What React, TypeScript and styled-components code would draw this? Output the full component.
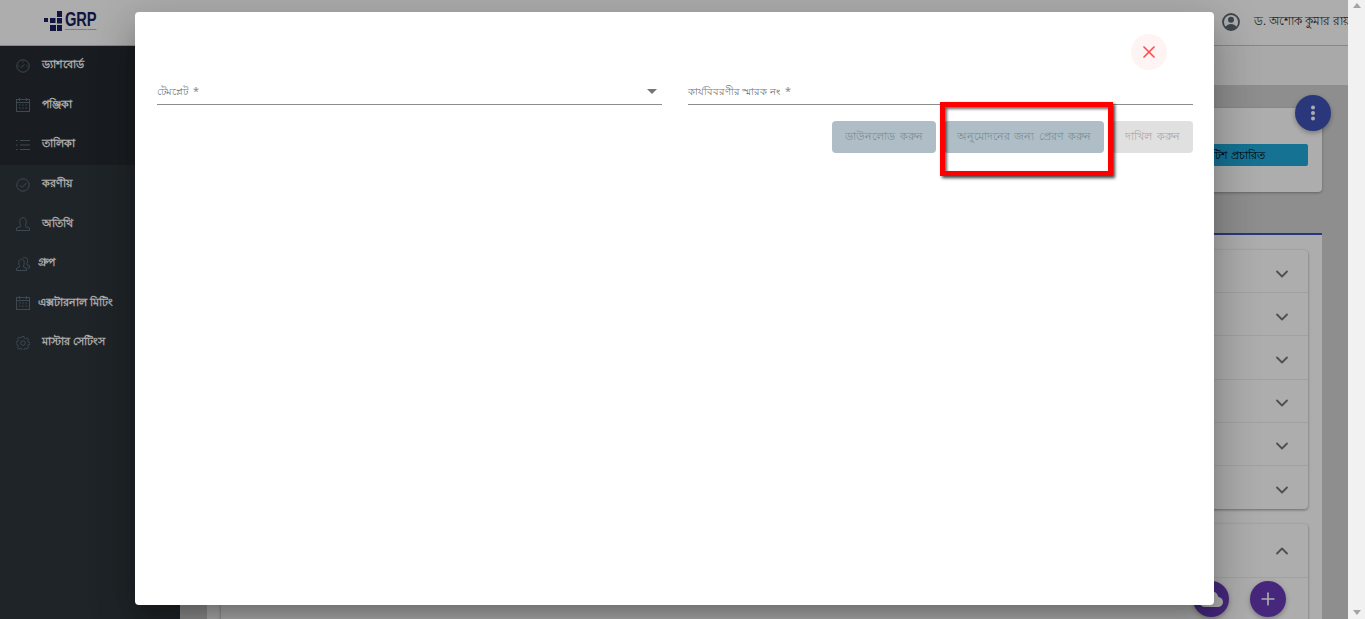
import React from "react";
import styled, { createGlobalStyle } from "styled-components";
import { ChevronDown, ChevronUp, Plus, X } from "lucide-react";

const Global = createGlobalStyle`
  html, body { margin: 0; padding: 0; height: 100%; overflow: hidden; }
  body { font-family: "Noto Sans", "Liberation Sans", sans-serif; }
  * { box-sizing: border-box; }
`;

const Shell = styled.div`
  display: flex;
  width: 100vw;
  height: 100vh;
  overflow: hidden;
`;
const Viewport = styled.div`
  position: relative;
  flex: 1;
  min-width: 0;
  display: flex;
  flex-direction: column;
  overflow: hidden;
  background: #d2d2d2;
`;
const Header = styled.header`
  height: 46px;
  flex: none;
  display: flex;
  align-items: center;
  background: #fff;
  border-bottom: 1px solid #c8c8c8;
`;
const LogoBox = styled.div`
  width: 180px;
  flex: none;
  height: 100%;
  padding: 11px 0 0 44px;
`;
const Logo = styled.div`
  display: flex;
  align-items: flex-start;
  gap: 3px;
  color: #1b1f5e;
`;
const LogoWord = styled.div`
  display: flex;
  flex-direction: column;
  width: 31px;
  font-family: "Liberation Sans", sans-serif;
  font-weight: 700;
  color: #1b1f5e;
`;
const LogoLetters = styled.span`
  font-size: 21px;
  line-height: 16px;
  letter-spacing: -0.2px;
  display: block;
  transform: scaleX(0.7);
  transform-origin: left top;
  white-space: nowrap;
`;
const LogoTag = styled.span`
  margin-top: 1px;
  font-size: 2.2px;
  line-height: 3px;
  font-weight: 400;
  white-space: nowrap;
`;
const HeaderRight = styled.div`
  margin-left: auto;
  display: flex;
  align-items: center;
  gap: 14px;
  width: 126px;
  flex: none;
  overflow: hidden;
  white-space: nowrap;
  font-size: 11.5px;
  color: #333;
`;
const AvatarIcon = styled.svg`
  flex: none;
  margin-top: -2px;
`;
const Body = styled.div`
  flex: 1;
  display: flex;
  min-height: 0;
`;
const Sidebar = styled.nav`
  width: 180px;
  flex: none;
  background: #2e353b;
  display: flex;
  flex-direction: column;
`;
const SideRow = styled.div<{ $dim?: boolean; $tight?: boolean }>`
  height: 39.6px;
  flex: none;
  display: flex;
  align-items: center;
  padding-left: 16px;
  gap: ${(p) => (p.$tight ? "8px" : "12px")};
  background: ${(p) => (p.$dim ? "#262b31" : "transparent")};
  color: #fff;
  font-weight: 700;
  font-size: 11px;
  white-space: nowrap;
  svg { flex: none; color: #5c6b78; }
`;
const Main = styled.main`
  flex: 1;
  min-width: 0;
  display: flex;
  flex-direction: column;
`;
const SubBar = styled.div`
  height: 39px;
  flex: none;
  background: #fafafa;
`;
const Content = styled.div`
  flex: 1;
  min-height: 0;
  padding: 23px 26px 0 27px;
  display: flex;
  flex-direction: column;
  overflow: hidden;
`;
const TopCard = styled.section`
  height: 84px;
  flex: none;
  background: #fff;
  border-radius: 4px;
  box-shadow: 0 1px 3px rgba(0, 0, 0, 0.3);
  padding: 36px 14px 0 0;
  display: flex;
  justify-content: flex-end;
`;
const InfoButton = styled.div`
  width: 118px;
  height: 22px;
  background: #20a8d8;
  border-radius: 2px;
  color: #000;
  font-size: 10.5px;
  font-weight: 500;
  line-height: 22px;
  white-space: nowrap;
  overflow: hidden;
  text-align: right;
  padding-right: 43px;
`;
const Panel = styled.section`
  margin-top: 41px;
  flex: 1;
  background: #fff;
  border-top: 2px solid #3f51b5;
  padding: 15px 14px 0;
  display: flex;
  flex-direction: column;
  gap: 15px;
`;
const Accordion = styled.div`
  flex: none;
  background: #fff;
  border-radius: 4px;
  box-shadow: 0 1px 3px rgba(0, 0, 0, 0.4);
`;
const AccordionRow = styled.div<{ $tall?: boolean }>`
  height: ${(p) => (p.$tall ? "54px" : "43.2px")};
  padding-top: ${(p) => (p.$tall ? "0" : "5px")};
  display: flex;
  align-items: center;
  justify-content: flex-end;
  padding-right: 16px;
  border-bottom: 1px solid #ededed;
  color: #757575;
  &:last-child { border-bottom: none; }
`;
const Fab = styled.div<{ $color: string; $x: number; $y: number }>`
  position: absolute;
  left: ${(p) => p.$x}px;
  top: ${(p) => p.$y}px;
  width: 36px;
  height: 36px;
  border-radius: 50%;
  background: ${(p) => p.$color};
  color: #fff;
  display: flex;
  align-items: center;
  justify-content: center;
  box-shadow: 0 2px 5px rgba(0, 0, 0, 0.3);
`;
const Backdrop = styled.div`
  position: absolute;
  inset: 0;
  background: rgba(0, 0, 0, 0.32);
`;
const Dialog = styled.div`
  position: absolute;
  left: 135px;
  top: 12px;
  width: 1079px;
  height: 593px;
  background: #fff;
  border-radius: 4px;
  padding: 22px 21px 0 22px;
  box-shadow: 0 11px 15px -7px rgba(0, 0, 0, 0.2), 0 24px 38px 3px rgba(0, 0, 0, 0.14),
    0 9px 46px 8px rgba(0, 0, 0, 0.12);
`;
const CloseRow = styled.div`
  display: flex;
  justify-content: flex-end;
  padding-right: 26px;
  height: 36px;
`;
const CloseButton = styled.button`
  width: 36px;
  height: 36px;
  padding: 0;
  border: none;
  border-radius: 50%;
  background: #fff4f4;
  color: #ff4d4d;
  display: flex;
  align-items: center;
  justify-content: center;
`;
const Fields = styled.div`
  margin-top: 9px;
  display: grid;
  grid-template-columns: 505px 505px;
  column-gap: 26px;
`;
const Field = styled.div`
  height: 26px;
  border-bottom: 1px solid #8c8c8c;
  display: flex;
  align-items: center;
  justify-content: space-between;
  font-size: 9.6px;
  color: #757575;
  white-space: nowrap;
`;
const Required = styled.span`
  margin-left: 5px;
  font-size: 11px;
  color: #8a8a8a;
`;
const Caret = styled.span`
  width: 0;
  height: 0;
  margin-right: 5px;
  border-left: 5px solid transparent;
  border-right: 5px solid transparent;
  border-top: 5px solid #757575;
`;
const Actions = styled.div`
  margin-top: 16px;
  display: flex;
  justify-content: flex-end;
  gap: 8px;
`;
const ActionButton = styled.button<{ $w: number; $muted?: boolean }>`
  width: ${(p) => p.$w}px;
  height: 32px;
  padding: 0;
  border: none;
  border-radius: 4px;
  background: ${(p) => (p.$muted ? "#e0e0e0" : "#afbec6")};
  color: ${(p) => (p.$muted ? "#a6a6a6" : "#7b8b94")};
  font-family: inherit;
  font-size: 11px;
  word-spacing: 1.5px;
  white-space: nowrap;
`;
const Highlight = styled.div`
  position: absolute;
  left: 805px;
  top: 90px;
  width: 173px;
  height: 74px;
  border: 5px solid #ff0000;
  box-shadow: 2px 2px 3px rgba(0, 0, 0, 0.75), inset 2px 2px 3px rgba(0, 0, 0, 0.6);
`;
const Scrollbar = styled.div`
  width: 17px;
  flex: none;
  background: #f1f1f1;
  display: flex;
  flex-direction: column;
  justify-content: space-between;
  align-items: center;
  padding: 3px 0 4px;
`;
const ScrollArrow = styled.span<{ $up?: boolean }>`
  width: 0;
  height: 0;
  border-left: 4px solid transparent;
  border-right: 4px solid transparent;
  ${(p) => (p.$up ? "border-bottom: 5px solid #a3a3a3;" : "border-top: 5px solid #a3a3a3;")}
`;

const stroke = { fill: "none", stroke: "currentColor", strokeWidth: 1 };
const Ico: React.FC<{ children: React.ReactNode }> = ({ children }) => (
  <svg width="14" height="14" viewBox="0 0 14 14" {...stroke}>{children}</svg>
);
const Gauge = () => (
  <Ico><circle cx="7" cy="7" r="6.2" /><path d="M4.5 9l4-3.5M2.5 7h1M10.5 7h1M7 2.500v1" /></Ico>
);
const Cal = () => (
  <Ico><rect x="0.5" y="1.500" width="13" height="12" /><path d="M3.500 0v3M10.500 0v3M0.500 4.500h13" /><path d="M3 7h1.500M6.200 7h1.500M9.500 7h1.500M3 10h1.500M6.200 10h1.500M9.500 10h1.500" /></Ico>
);
const ListI = () => (
  <Ico><path d="M4 2.500h10M4 7h10M4 11.500h10M0 2.500h1.500M0 7h1.500M0 11.500h1.500" /></Ico>
);
const Check = () => (
  <Ico><circle cx="7" cy="7" r="6.200" /><path d="M4 7.200l2.200 2.200 4-4.200" /></Ico>
);
const UserI = () => (
  <Ico><path d="M4.500 8.500C3.800 7.500 3.800 5.800 3.800 4.500 3.800 2 5.200.6 7 .6s3.200 1.400 3.200 3.900c0 1.300 0 3-.7 4v1l4 1.500v2.500H.5V11l4-1.500z" /></Ico>
);
const Group = () => (
  <Ico><path d="M3.500 9C2.800 8 2.800 6.800 2.800 5.500 2.800 3.200 4 2 5.500 2s2.700 1.200 2.700 3.500c0 1.300 0 2.500-.7 3.500v1l3 1.200v2.300H.5v-2.300l3-1.200zM7 1c.5-.4 1.200-.6 1.800-.6 1.700 0 2.800 1.200 2.800 3.300 0 1.200-.2 2.300-.7 3v1l2.600 1v2.300h-2" /></Ico>
);
const Gear = () => (
  <Ico><circle cx="7" cy="7" r="2.300" /><path d="M6 .5h2l.4 1.800 1.400.6 1.600-1 1.400 1.400-1 1.600.6 1.400 1.800.4v2l-1.800.4-.6 1.400 1 1.600-1.400 1.400-1.600-1-1.400.6-.4 1.800H6l-.4-1.800-1.400-.6-1.600 1-1.400-1.400 1-1.600-.6-1.400L-.1 8V6l1.800-.4.6-1.400-1-1.600 1.400-1.400 1.600 1 1.400-.6z" transform="translate(.2 0) scale(.97)" /></Ico>
);

export default function App() {
  return (
    <>
      <Global />
      <Shell>
        <Viewport>
          <Header>
            <LogoBox>
              <Logo>
                <svg width="18" height="20" viewBox="0 0 18 20" fill="currentColor" style={{ flex: "none" }}>
                  <rect x="0" y="7" width="4" height="4" />
                  <rect x="6" y="7" width="5.500" height="5" />
                  <rect x="13" y="0" width="5.500" height="6" />
                  <rect x="13" y="7" width="5.500" height="5.500" />
                  <rect x="6" y="14" width="6" height="6" />
                  <rect x="13" y="14" width="5.500" height="6" />
                </svg>
                <LogoWord>
                  <LogoLetters>GRP</LogoLetters>
                  <LogoTag>Government Resource Planning</LogoTag>
                </LogoWord>
              </Logo>
            </LogoBox>
            <HeaderRight>
              <AvatarIcon width="18" height="18" viewBox="0 0 18 18" fill="#5c6873">
                <circle cx="9" cy="9" r="8" fill="none" stroke="#5c6873" strokeWidth="1.800" />
                <circle cx="9" cy="6.800" r="3" />
                <path d="M3.500 14c1-2 3.300-3 5.500-3s4.500 1 5.500 3C13 15.600 11 16.300 9 16.300S5 15.600 3.500 14z" />
              </AvatarIcon>
              <span>ড. অশোক কুমার রায়</span>
            </HeaderRight>
          </Header>
          <Body>
            <Sidebar>
              <SideRow $dim><Gauge />ড্যাশবোর্ড</SideRow>
              <SideRow $dim><Cal />পঞ্জিকা</SideRow>
              <SideRow $dim><ListI />তালিকা</SideRow>
              <SideRow><Check />করণীয়</SideRow>
              <SideRow><UserI />অতিথি</SideRow>
              <SideRow $tight><Group />গ্রুপ</SideRow>
              <SideRow $tight><Cal />এক্সটারনাল মিটিং</SideRow>
              <SideRow><Gear />মাস্টার সেটিংস</SideRow>
            </Sidebar>
            <Main>
              <SubBar />
              <Content>
                <TopCard>
                  <InfoButton>নোটিশ প্রচারিত</InfoButton>
                </TopCard>
                <Panel>
                  <Accordion>
                    {[0, 1, 2, 3, 4, 5].map((i) => (
                      <AccordionRow key={i}><ChevronDown size={20} strokeWidth={2.200} /></AccordionRow>
                    ))}
                  </Accordion>
                  <Accordion>
                    <AccordionRow $tall><ChevronUp size={20} strokeWidth={2.200} /></AccordionRow>
                    <AccordionRow $tall />
                  </Accordion>
                </Panel>
              </Content>
            </Main>
          </Body>
          <Fab $color="#3f51b5" $x={1295} $y={95}>
            <svg width="6" height="16" viewBox="0 0 6 16" fill="currentColor">
              <circle cx="3" cy="2.500" r="2" /><circle cx="3" cy="8" r="2" /><circle cx="3" cy="13.500" r="2" />
            </svg>
          </Fab>
          <Fab $color="#673ab7" $x={1193} $y={581}>
            <svg width="24" height="24" viewBox="0 0 24 24" fill="currentColor">
              <path d="M19.350 10.040C18.670 6.590 15.640 4 12 4 9.110 4 6.600 5.640 5.350 8.040 2.340 8.360 0 10.910 0 14c0 3.310 2.690 6 6 6h13c2.760 0 5-2.240 5-5 0-2.640-2.050-4.780-4.650-4.960z" />
            </svg>
          </Fab>
          <Fab $color="#673ab7" $x={1250} $y={581}><Plus size={20} strokeWidth={2} /></Fab>
          <Backdrop />
          <Dialog>
            <CloseRow>
              <CloseButton aria-label="close"><X size={20} strokeWidth={2} /></CloseButton>
            </CloseRow>
            <Fields>
              <Field>
                <span>টেমপ্লেট<Required>*</Required></span>
                <Caret />
              </Field>
              <Field>
                <span>কার্যবিবরণীর স্মারক নং<Required>*</Required></span>
              </Field>
            </Fields>
            <Actions>
              <ActionButton $w={104}>ডাউনলোড করুন</ActionButton>
              <ActionButton $w={160}>অনুমোদনের জন্য প্রেরণ করুন</ActionButton>
              <ActionButton $w={81} $muted>দাখিল করুন</ActionButton>
            </Actions>
            <Highlight />
          </Dialog>
        </Viewport>
        <Scrollbar>
          <ScrollArrow $up />
          <ScrollArrow />
        </Scrollbar>
      </Shell>
    </>
  );
}
